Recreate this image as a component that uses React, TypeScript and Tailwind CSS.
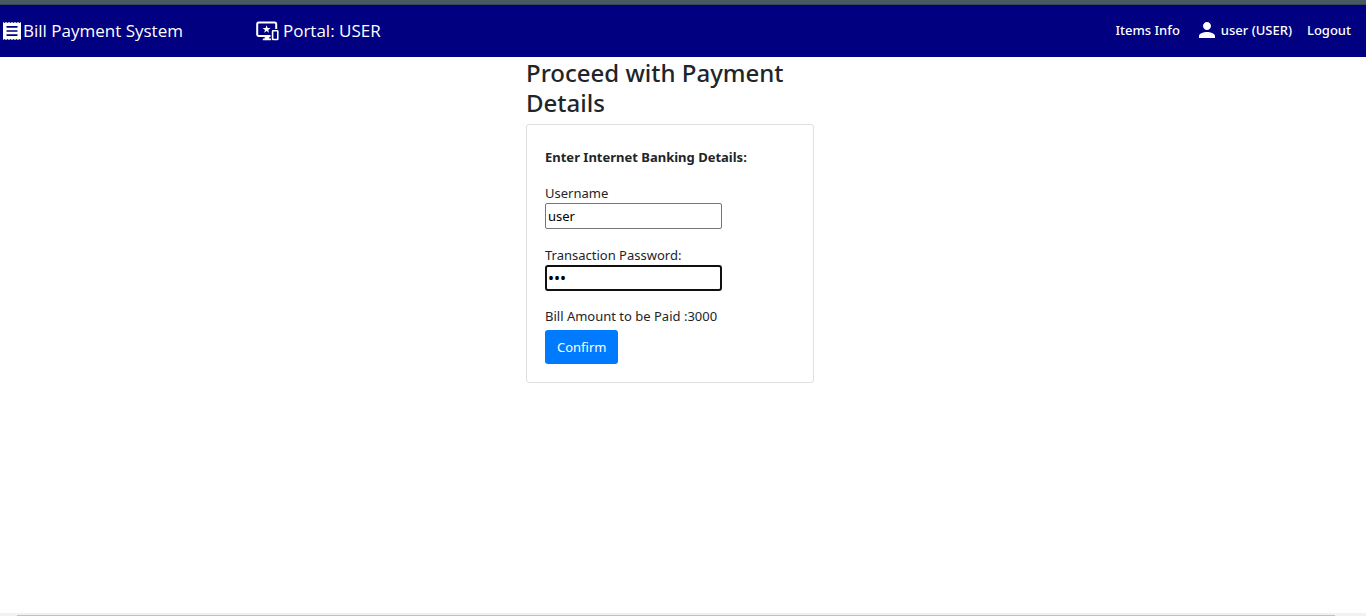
import { useState } from "react";
import { MdPerson } from "react-icons/md";

function ReceiptIcon() {
  return (
    <svg viewBox="0 0 18 18" className="h-[18px] w-[18px]" aria-hidden="true">
      <path
        fill="currentColor"
        d="M0 0l1.5 1L3 0l1.5 1L6 0l1.5 1L9 0l1.5 1L12 0l1.5 1L15 0l1.5 1L18 0v18l-1.5-1-1.5 1-1.5-1-1.5 1-1.5-1L9 18l-1.5-1L6 18l-1.5-1L3 18l-1.5-1L0 18z"
      />
      <path stroke="#000080" strokeWidth="1.6" d="M3.5 4.9h11M3.5 9h11M3.5 13.1h11" />
    </svg>
  );
}

function DevicesIcon() {
  return (
    <svg viewBox="0 0 23 20" className="h-5 w-[23px]" fill="none" aria-hidden="true">
      <path
        stroke="currentColor"
        strokeWidth="2"
        d="M14.5 15H2.6A1.4 1.4 0 0 1 1.2 13.6V3A1.4 1.4 0 0 1 2.6 1.6h16.2A1.4 1.4 0 0 1 20.2 3v5"
      />
      <path fill="currentColor" d="M8.7 15.5h4.6v1.9h1.8v1.8H6.8v-1.8h1.9z" />
      <path
        fill="currentColor"
        d="M10.6 4.3l1 2.8h3l-2.4 1.8.9 2.9-2.5-1.8-2.5 1.8.9-2.9-2.4-1.8h3z"
      />
      <rect x="16.6" y="9.7" width="5.2" height="8.8" rx="0.6" stroke="currentColor" strokeWidth="1.6" />
    </svg>
  );
}

function NavBar() {
  return (
    <nav className="flex h-[52px] items-center justify-between bg-[#000080] pr-[15px] text-white">
      <div className="flex items-center gap-[73px] text-[17px] leading-6">
        <a href="#home" className="flex items-center gap-0.5 pl-[3px]">
          <ReceiptIcon />
          Bill Payment System
        </a>
        <a href="#portal" className="flex items-center gap-1">
          <DevicesIcon />
          Portal: USER
        </a>
      </div>
      <div className="flex items-center gap-[15px] pb-0.5 font-['Noto_Sans','Open_Sans',sans-serif] text-[13px] leading-5 font-medium">
        <a href="#items">Items Info</a>
        <a href="#profile" className="flex items-center gap-0.5">
          <MdPerson className="size-6" aria-hidden="true" />
          user (USER)
        </a>
        <a href="#logout">Logout</a>
      </div>
    </nav>
  );
}

function PaymentForm() {
  const [username, setUsername] = useState("user");
  const [password, setPassword] = useState("123");

  return (
    <form
      className="flex flex-col items-start rounded-[3px] border border-[#dfdfdf] px-[18px] pt-[22px] pb-[18px] font-['Noto_Sans','Open_Sans',sans-serif] text-[13px] leading-5"
      onSubmit={(event) => event.preventDefault()}
    >
      <p className="mb-4 font-bold">Enter Internet Banking Details:</p>
      <label htmlFor="username">Username</label>
      <input
        id="username"
        type="text"
        value={username}
        onChange={(event) => setUsername(event.target.value)}
        className="mb-4 h-[26px] w-[177px] rounded-[2px] border border-[#767676] px-0.5 text-black"
      />
      <label htmlFor="password">Transaction Password:</label>
      <input
        id="password"
        type="password"
        value={password}
        onChange={(event) => setPassword(event.target.value)}
        className="mb-[15px] h-[26px] w-[177px] rounded-[3px] border-2 border-[#101010] px-px text-[16px] text-black outline-none"
      />
      <p className="mb-1">Bill Amount to be Paid :3000</p>
      <button type="submit" className="h-[34px] rounded-[3px] bg-[#007bff] px-3 text-white">
        Confirm
      </button>
    </form>
  );
}

export default function App() {
  return (
    <div className="flex min-h-screen flex-col bg-white font-['Open_Sans','Noto_Sans',sans-serif] text-[#212529]">
      <div className="h-[5px] border-b border-[#37474f] bg-[#475a63]" />
      <NavBar />
      <main className="flex flex-1 justify-center pr-[26px]">
        <div className="w-72">
          <h1 className="mt-px mb-1.5 font-['Noto_Sans','Open_Sans',sans-serif] text-[24px] leading-[30px] font-medium">
            Proceed with Payment Details
          </h1>
          <PaymentForm />
        </div>
      </main>
      <div className="flex h-[3px] items-end bg-[#f1f1f1] pr-[31px] pl-[17px]">
        <div className="h-px flex-1 bg-[#c1c1c1]" />
      </div>
    </div>
  );
}
